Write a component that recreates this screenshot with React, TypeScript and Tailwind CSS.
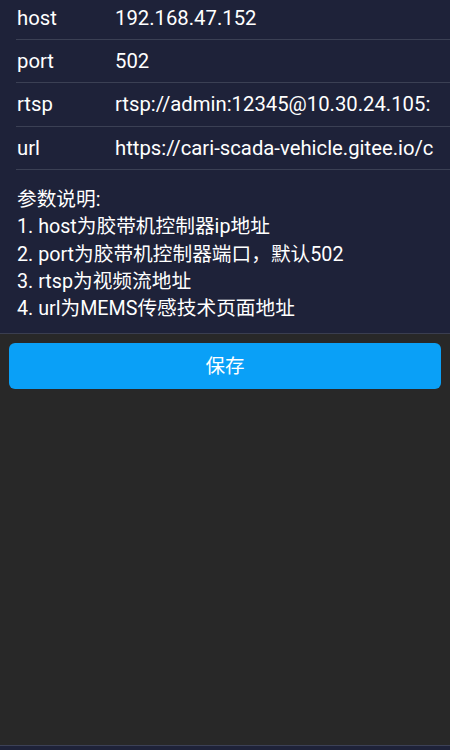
import React from "react";

const rows = [
  { k: "host", v: "192.168.47.152" },
  { k: "port", v: "502" },
  { k: "rtsp", v: "rtsp://admin:12345@10.30.24.105:" },
  { k: "url", v: "https://cari-scada-vehicle.gitee.io/c" },
];

const notes = [
  "参数说明:",
  "1. host为胶带机控制器ip地址",
  "2. port为胶带机控制器端口，默认502",
  "3. rtsp为视频流地址",
  "4. url为MEMS传感技术页面地址",
];

export default function App() {
  return (
    <div
      className="w-[450px] h-[750px] overflow-hidden flex flex-col bg-[#282828] text-white"
      style={{ fontFamily: 'Roboto, "Noto Sans CJK SC", sans-serif' }}
    >
      <div className="bg-[#1e2239] border-b border-[#3a3e50]">
        <div className="-mt-[3.33px]">
          {rows.map((r) => (
            <div key={r.k} className="ml-4 h-[43.33px] border-b border-[#3b4054] flex items-center text-[20.3px]">
              <div className="w-[99px] pl-px shrink-0">{r.k}</div>
              <div className="w-[320px] overflow-hidden whitespace-nowrap">{r.v}</div>
            </div>
          ))}
        </div>
        <div className="pl-[17px] pt-[16px] pb-[11px] text-[19.7px] leading-[27.3px]">
          {notes.map((n) => (
            <div key={n}>{n}</div>
          ))}
        </div>
      </div>
      <div className="flex-1 px-[9px] pt-[9px]">
        <button className="w-full h-[46px] rounded-[6px] bg-[#0aa0f7] text-white text-[19.5px] flex items-center justify-center">
          保存
        </button>
      </div>
      <div className="h-[5px] bg-[#1e2239] border-t border-[#3c4157]" />
    </div>
  );
}
